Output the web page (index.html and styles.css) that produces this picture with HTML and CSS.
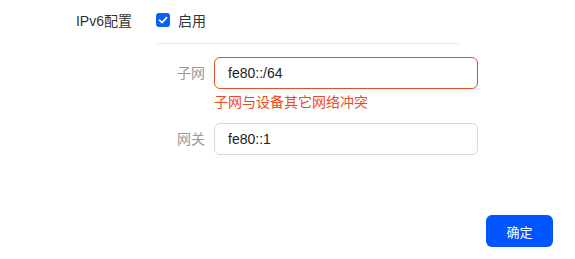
FILE: index.html
```html
<!DOCTYPE html>
<html lang="zh-CN">
<head>
    <meta charset="UTF-8">
    <meta name="viewport" content="width=device-width, initial-scale=1.0">
    <title>IPv6配置</title>
    <link rel="stylesheet" href="styles.css">
</head>
<body>
    <div class="panel">
        <div class="row">
            <div class="row-label">IPv6配置</div>
            <label class="check">
                <span class="check-box">
                    <svg width="10" height="10" viewBox="0 0 10 10"><path d="M1.5 5.2 L4 7.6 L8.6 2.6" fill="none" stroke="#fff" stroke-width="1.6" stroke-linecap="round" stroke-linejoin="round"/></svg>
                </span>
                <span>启用</span>
            </label>
        </div>

        <div class="divider"></div>

        <div class="sub-form">
            <div class="field">
                <div class="field-label">子网</div>
                <div class="field-body">
                    <input class="text-input has-error" type="text" value="fe80::/64">
                    <div class="error-text">子网与设备其它网络冲突</div>
                </div>
            </div>
            <div class="field">
                <div class="field-label">网关</div>
                <div class="field-body">
                    <input class="text-input" type="text" value="fe80::1">
                </div>
            </div>
        </div>

        <div class="footer">
            <button class="btn-primary">确定</button>
        </div>
    </div>
</body>
</html>
```

FILE: styles.css
```css
* {
    margin: 0;
    padding: 0;
    box-sizing: border-box;
    font-family: 'Liberation Sans', 'Noto Sans CJK SC', sans-serif;
}

body {
    background: white;
    color: #333;
    font-size: 14px;
}

.panel {
    padding-top: 4px;
}

.row {
    display: flex;
    align-items: center;
    height: 32px;
}

.row-label {
    width: 132px;
    text-align: right;
    color: #333;
}

.check {
    display: flex;
    align-items: center;
    gap: 8px;
    margin-left: 24px;
    color: #333;
}

.check-box {
    width: 14px;
    height: 14px;
    border-radius: 3px;
    background: #0d5ef5;
    display: flex;
    justify-content: center;
    align-items: center;
}

.divider {
    margin: 7px 0 0 156px;
    width: 304px;
    height: 1px;
    background: #ececec;
}

.sub-form {
    margin-top: 13px;
    margin-left: 156px;
}

.field {
    display: flex;
    align-items: flex-start;
    margin-bottom: 10px;
}

.field-label {
    width: 49px;
    height: 32px;
    line-height: 32px;
    text-align: right;
    color: #999;
    margin-right: 9px;
}

.text-input {
    width: 264px;
    height: 32px;
    padding: 0 13px;
    border: 1px solid #d9d9d9;
    border-radius: 6px;
    font-size: 14px;
    color: #222;
    outline: none;
}

.text-input.has-error {
    border-color: #ee4a24;
}

.error-text {
    color: #ee4a24;
    font-size: 14px;
    line-height: 20px;
    padding-top: 3px;
    margin-bottom: 1px;
}

.footer {
    display: flex;
    justify-content: flex-end;
    padding-right: 22px;
    margin-top: 60px;
}

.btn-primary {
    width: 67px;
    height: 32px;
    border: none;
    border-radius: 6px;
    background: #0055ff;
    color: white;
    font-size: 13px;
    cursor: pointer;
}
```
